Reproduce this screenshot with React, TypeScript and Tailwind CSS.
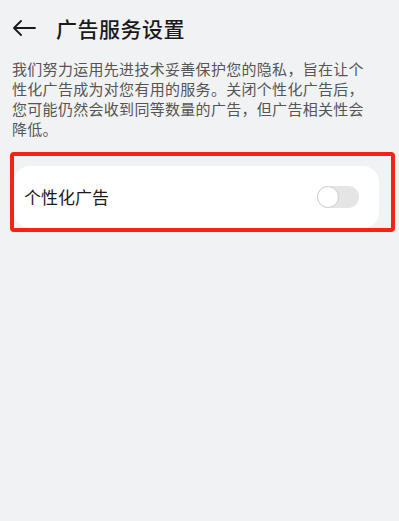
import { useState } from "react";

const font = {
  fontFamily: '"Noto Sans CJK SC", "Noto Sans", sans-serif',
};

const BackArrow = () => (
  <svg width="24" height="16" viewBox="0 0 24 16" fill="none">
    <path d="M23 8H2M9 1L2 8l7 7" stroke="#1a1a1a" strokeWidth="1.8" strokeLinecap="round" strokeLinejoin="round" />
  </svg>
);

const App = () => {
  const [on, setOn] = useState(false);

  return (
    <div className="w-[399px] h-[521px] bg-[#f1f2f4] text-[#1a1a1a]" style={font}>
      <div className="flex items-center h-[56px] pl-[12px]">
        <BackArrow />
        <h1 className="ml-[20px] text-[21px] font-medium leading-none tracking-[0.5px]">广告服务设置</h1>
      </div>

      <p className="ml-[12px] mt-[3px] w-[362px] text-[15px] leading-[20px] tracking-[0.3px] text-[#555]">
        我们努力运用先进技术妥善保护您的隐私，旨在让个性化广告成为对您有用的服务。关闭个性化广告后，您可能仍然会收到同等数量的广告，但广告相关性会降低。
      </p>

      <div className="ml-[10px] mr-[4px] mt-[13px] border-4 border-[#f52218] rounded-[4px] pt-[10px] pr-[12px]">
        <div className="flex items-center justify-between h-[62px] bg-white rounded-[16px] pl-[10px] pr-[20px]">
          <span className="text-[17px]">个性化广告</span>
          <button
            onClick={() => setOn(!on)}
            className={`relative w-[42px] h-[22px] rounded-full ${on ? "bg-[#0a59f7]" : "bg-[#e5e5e5]"}`}
          >
            <span
              className={`absolute top-0 w-[22px] h-[22px] rounded-full bg-white border border-[#cfcfcf] ${on ? "left-[20px]" : "left-0"}`}
            />
          </button>
        </div>
      </div>
    </div>
  );
};

export default App;
